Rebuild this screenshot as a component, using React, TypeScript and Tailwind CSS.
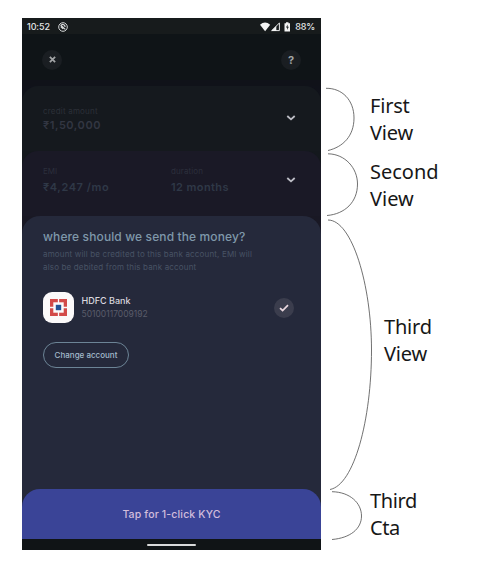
import React from 'react';

function Chevron() {
  return (
    <svg className="h-[8px] w-[10px]" viewBox="0 0 10 8" fill="none" stroke="#bdbec6" strokeWidth="1.8">
      <path d="M1.3 2 L5 5.4 L8.7 2" />
    </svg>
  );
}

function StatusBar() {
  return (
    <div className="flex h-[16px] items-center bg-[#171b1c] pl-[5px] pr-[6px] pt-px text-[9px] font-medium leading-none text-[#e4e6e7]">
      <span className="tracking-[-0.1px]">10:52</span>
      <svg className="ml-[8px] h-[10px] w-[10px]" viewBox="0 0 10 10" fill="none" stroke="#d5d7d8">
        <circle cx="5" cy="5" r="4.3" strokeWidth="1" />
        <path d="M2.6 3 L7.3 7.4 M3.4 2.7 C5 1.9 7 2.8 7.1 5 M2.7 4.6 L5.1 6.9" strokeWidth="1.2" />
      </svg>
      <svg className="ml-auto h-[10px] w-[33px]" viewBox="0 0 33 10" fill="#f3f4f4">
        <path d="M0 2.8 Q5 -1.6 10.2 2.8 L5.1 9.2 Z" />
        <path d="M11.7 8.6 L19.4 1 V8.6 Z" fill="none" stroke="#e8e9e9" strokeWidth="1" />
        <path d="M11.3 9 L16.3 4 V9 Z" />
        <path d="M24.5 1.3 H26 V0.3 H28.5 V1.3 H30 V9.5 H24.5 Z" />
        <path d="M27.6 2.5 L26 5.6 H27.2 V8 L28.8 4.8 H27.6 Z" fill="#171b1c" />
      </svg>
      <span className="ml-[2px] text-[9px] tracking-[-0.2px]">88%</span>
    </div>
  );
}

function BankLogo() {
  return (
    <div className="flex h-[31px] w-[31px] items-center justify-center rounded-[9px] bg-[#fbf9fa]">
      <svg className="h-[17px] w-[17px]" viewBox="0 0 17 17">
        <rect width="17" height="17" fill="#d34a49" />
        <path d="M8.5 0 V17 M0 8.5 H17" stroke="#fbf9fa" strokeWidth="1.3" />
        <rect x="3.3" y="3.3" width="10.4" height="10.4" fill="#fbf9fa" />
        <rect x="5.8" y="5.8" width="5.4" height="5.4" fill="#235294" />
      </svg>
    </div>
  );
}

function Phone() {
  return (
    <div className="flex h-[532px] w-[299px] flex-col overflow-hidden bg-[#0f1417] font-[Inter,sans-serif]">
      <StatusBar />
      <div className="flex h-[46px] items-center justify-between px-[20px] pt-[5px]">
        <div className="flex h-[20px] w-[20px] items-center justify-center rounded-full bg-[#1a1e22]">
          <svg className="h-[7px] w-[7px]" viewBox="0 0 8 8" stroke="#a2a4a6" strokeWidth="2">
            <path d="M1 1 L7 7 M7 1 L1 7" />
          </svg>
        </div>
        <div className="flex h-[20px] w-[20px] items-center justify-center rounded-full bg-[#1a1e22] pt-px text-[11px] font-bold leading-none text-[#a2a4a6]">?</div>
      </div>
      <div className="h-[6px] bg-[#101219]" />
      <div className="bg-[#10121a]">
        <div className="flex h-[65px] items-start rounded-t-[16px] bg-[#15191e] pl-[21px] pt-[19px]">
          <div className="w-[243px]">
            <div className="h-[13px] text-[8px] leading-[13px] tracking-[0.2px] text-[#2c3038]">credit amount</div>
            <div className="h-[17px] whitespace-nowrap text-[11px] font-semibold leading-[15px] tracking-[0.55px] text-[#323642]">₹1,50,000</div>
          </div>
          <div className="pt-[9px]"><Chevron /></div>
        </div>
      </div>
      <div className="bg-[#14181d]">
        <div className="flex h-[65px] items-start rounded-t-[16px] bg-[#1a1926] pl-[21px] pt-[14px]">
          <div className="w-[128px]">
            <div className="h-[13px] text-[8px] leading-[13px] text-[#2c2f3c]">EMI</div>
            <div className="h-[18px] whitespace-nowrap text-[11px] font-semibold leading-[18px] tracking-[0.58px] text-[#2f3847]">₹4,247 /mo</div>
          </div>
          <div className="w-[115px]">
            <div className="h-[13px] text-[8px] leading-[13px] tracking-[0.1px] text-[#2c2f3c]">duration</div>
            <div className="h-[18px] whitespace-nowrap text-[11px] font-semibold leading-[18px] tracking-[0.4px] text-[#2f3847]">12 months</div>
          </div>
          <div className="pt-[11px]"><Chevron /></div>
        </div>
      </div>
      <div className="bg-[#191824]">
        <div className="flex h-[273px] flex-col rounded-t-[18px] bg-[#25293b] pl-[21px] pt-[12px]">
          <h1 className="h-[18px] whitespace-nowrap text-[12px] font-medium leading-[18px] tracking-[0.12px] text-[#7f98aa]">where should we send the money?</h1>
          <div className="mt-[2px] whitespace-nowrap text-[8px] leading-[12.5px] tracking-[0.16px] text-[#485365]">
            <p>amount will be credited to this bank account, EMI will</p>
            <p>also be debited from this bank account</p>
          </div>
          <div className="mt-[19px] flex h-[30px] items-center">
            <BankLogo />
            <div className="ml-[7.5px] w-[192.5px]">
              <div className="h-[15px] text-[9px] font-medium leading-[15px] text-[#dad8df]">HDFC Bank</div>
              <div className="h-[13px] text-[8.5px] leading-[13px] text-[#5a5c6a]">50100117009192</div>
            </div>
            <div className="mt-px flex h-[20px] w-[20px] items-center justify-center rounded-full bg-[#3b3d4d]">
              <svg className="h-[8px] w-[10px]" viewBox="0 0 10 8" fill="none" stroke="#ead8df" strokeWidth="1.7">
                <path d="M1 4.2 L3.6 6.5 L9 1.2" />
              </svg>
            </div>
          </div>
          <button className="mt-[20px] h-[26px] w-[86px] whitespace-nowrap rounded-full border border-[#6c8496] text-[8px] font-medium leading-none text-[#a3bacb]">Change account</button>
        </div>
      </div>
      <div className="bg-[#25293b]">
        <div className="flex h-[50px] items-center justify-center rounded-t-[18px] bg-[#3a4497] pt-px text-[10.5px] font-medium tracking-[0.15px] text-[#d3bedc]">Tap for 1-click KYC</div>
      </div>
      <div className="flex h-[11px] items-center justify-center bg-[#101416] pt-px">
        <div className="h-[2px] w-[49px] rounded-full bg-[#d9dada]" />
      </div>
    </div>
  );
}

function Label({ lines, className }: { lines: string[]; className: string }) {
  return (
    <div className={`whitespace-nowrap ${className}`}>
      {lines.map((line) => <div key={line}>{line}</div>)}
    </div>
  );
}

export default function App() {
  return (
    <div className="flex h-[582px] w-[501px] overflow-hidden bg-white">
      <div className="ml-[22px] mt-[18px]"><Phone /></div>
      <svg className="h-[582px] w-[49px] shrink-0 overflow-visible" viewBox="321 0 49 582" fill="none" stroke="#4c4c4c" strokeWidth="0.8">
        <path d="M326 88.3 C342 88 354 100 354 118 C354 136 343 147 328 150.5" />
        <path d="M328 153.8 C345 154 357.5 168 357.5 184 C357.5 202 345 214 327 215.5" />
        <path d="M328 220 C352 220 371.5 285 371.5 350 C371.5 420 354 485 330 489.5" />
        <path d="M332 491.7 C350 492 361.5 503 361.5 516 C361.5 529 350 538 332 539.5" />
      </svg>
      <div className="flex flex-col font-['Noto_Sans',sans-serif] text-[20px] leading-[27px] text-[#171717]">
        <Label lines={['First', 'View']} className="mt-[92px] h-[54px] tracking-[-0.2px]" />
        <Label lines={['Second', 'View']} className="mt-[12px] h-[54px]" />
        <Label lines={['Third', 'View']} className="ml-[14px] mt-[101px] h-[54px] tracking-[-0.2px]" />
        <Label lines={['Third', 'Cta']} className="mt-[120px] h-[54px] tracking-[-0.4px]" />
      </div>
    </div>
  );
}
